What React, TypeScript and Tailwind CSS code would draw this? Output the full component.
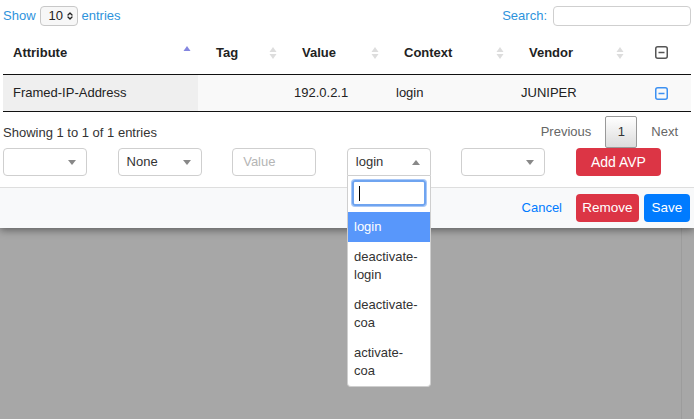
import { ChevronUp, ChevronDown } from "lucide-react";

const cols = "grid grid-cols-[195px_86px_102px_125px_120px_60px]";

function SortArrows({ active }: { active?: boolean }) {
  if (active) {
    return (
      <svg width="8" height="14" viewBox="0 0 8 14" className="shrink-0 -mt-[3px] -ml-[3px]">
        <path d="M4 1 L7.5 6 L0.5 6 Z" fill="#8486e0" />
      </svg>
    );
  }
  return (
    <svg width="8" height="14" viewBox="0 0 8 14" className="shrink-0">
      <path d="M4 1 L7.5 6 L0.5 6 Z" fill="#dddddd" />
      <path d="M4 13 L7.5 8 L0.5 8 Z" fill="#dddddd" />
    </svg>
  );
}

function MinusBox({ color }: { color: string }) {
  return (
    <svg width="13" height="13" viewBox="0 0 13 13">
      <rect x="0.75" y="0.75" width="11.5" height="11.5" rx="2" fill="none" stroke={color} strokeWidth="1.5" />
      <path d="M3.5 6.5 H9.5" stroke={color} strokeWidth="1.5" />
    </svg>
  );
}

function Caret({ up }: { up?: boolean }) {
  return (
    <svg width="8" height="5" viewBox="0 0 8 5">
      {up ? <path d="M4 0 L8 5 L0 5 Z" fill="#888" /> : <path d="M0 0 L8 0 L4 5 Z" fill="#888" />}
    </svg>
  );
}

function Select({ value, up }: { value?: string; up?: boolean }) {
  return (
    <div
      className={`w-[84px] h-[28px] border border-[#cfcfcf] bg-white flex items-center justify-between pl-[8px] pr-[10px] text-[13px] text-[#333] ${
        up ? "rounded-t-[4px]" : "rounded-[4px]"
      }`}
    >
      <span>{value}</span>
      <Caret up={up} />
    </div>
  );
}

function HeaderCell({ label, active, first }: { label: string; active?: boolean; first?: boolean }) {
  return (
    <div className={`flex items-center justify-between pt-[2px] ${first ? "pl-[10px]" : "pl-[18px]"} pr-[7px] font-bold text-[13px] text-[#222]`}>
      <span>{label}</span>
      <SortArrows active={active} />
    </div>
  );
}

export default function App() {
  return (
    <div className="relative w-[694px] h-[419px] overflow-hidden bg-[#a7a7a7] font-['Liberation_Sans',Arial,sans-serif]">
      <div className="absolute left-[681px] top-[228px] w-px h-[191px] bg-[#9c9c9c]" />

      <div className="relative bg-white shadow-[0_2px_8px_rgba(0,0,0,0.45)]">
        <div className="px-[3px]">
          {/* length + search */}
          <div className="h-[30px] flex items-center justify-between pt-[2px] text-[13px] text-[#2e93dc]">
            <div className="flex items-center gap-[4px]">
              <span>Show</span>
              <div className="w-[38px] h-[20px] border border-[#c8c8c8] rounded-[4px] bg-[#f7f7f7] flex items-center justify-between pl-[8px] pr-[3px] text-[#222]">
                <span>10</span>
                <div className="flex flex-col -space-y-[4px]">
                  <ChevronUp size={8} strokeWidth={4} />
                  <ChevronDown size={8} strokeWidth={4} />
                </div>
              </div>
              <span>entries</span>
            </div>
            <div className="flex items-center gap-[6px]">
              <span>Search:</span>
              <div className="w-[138px] h-[20px] border border-[#cfcfcf] rounded-[4px] bg-white" />
            </div>
          </div>

          {/* table header */}
          <div className={`${cols} h-[45px] border-b border-[#111]`}>
            <HeaderCell label="Attribute" active first />
            <HeaderCell label="Tag" />
            <HeaderCell label="Value" />
            <HeaderCell label="Context" />
            <HeaderCell label="Vendor" />
            <div className="flex items-center justify-center">
              <MinusBox color="#555" />
            </div>
          </div>

          {/* row */}
          <div className={`${cols} h-[37px] border-b border-[#111] text-[13px] text-[#222]`}>
            <div className="bg-[#efefef] flex items-center pl-[10px]">Framed-IP-Address</div>
            <div className="bg-[#f9f9f9]" />
            <div className="bg-[#f9f9f9] flex items-center pl-[10px]">192.0.2.1</div>
            <div className="bg-[#f9f9f9] flex items-center pl-[10px]">login</div>
            <div className="bg-[#f9f9f9] flex items-center pl-[10px]">JUNIPER</div>
            <div className="bg-[#f9f9f9] flex items-center justify-center">
              <MinusBox color="#3d91f2" />
            </div>
          </div>

          {/* info + paging */}
          <div className="h-[36px] flex items-start justify-between text-[13px] text-[#333]">
            <span className="mt-[11px]">Showing 1 to 1 of 1 entries</span>
            <div className="flex items-center mt-[4px] mr-[13px] text-[#666]">
              <span className="mr-[14px]">Previous</span>
              <div className="w-[32px] h-[32px] border border-[#999] rounded-[2px] bg-gradient-to-b from-white to-[#dcdcdc] flex items-center justify-center text-[#333]">
                1
              </div>
              <span className="ml-[14px]">Next</span>
            </div>
          </div>

          {/* form row */}
          <div className="h-[39px] flex items-start gap-[30.6px]">
            <Select />
            <Select value="None" />
            <div className="w-[84px] h-[28px] border border-[#cfcfcf] rounded-[4px] flex items-center px-[10px] text-[13px] text-[#b5b5b5]">
              Value
            </div>
            <Select value="login" up />
            <Select />
            <button className="w-[85px] h-[28px] rounded-[4px] bg-[#dc3545] text-white text-[14px]">
              Add AVP
            </button>
          </div>
        </div>

        {/* footer */}
        <div className="h-[41px] border-t border-[#dedede] bg-[#f8f9fa] flex items-center justify-end gap-[5px] pr-[4px]">
          <button className="text-[#007bff] text-[13px] mr-[9px]">Cancel</button>
          <button className="h-[28px] w-[63px] rounded-[4px] bg-[#dc3545] text-white text-[13.5px]">Remove</button>
          <button className="h-[28px] w-[46px] rounded-[4px] bg-[#007bff] text-white text-[13.5px]">Save</button>
        </div>
      </div>

      {/* open dropdown */}
      <div className="absolute left-[347px] top-[176px] w-[84px] bg-white border border-[#cfcfcf] border-t-0 rounded-b-[4px] text-[13px] text-[#333]">
        <div className="p-[4px]">
          <div className="h-[26px] border-2 border-[#6fa4f0] rounded-[3px] shadow-[0_0_0_1px_#a9c8f7] flex items-center pl-[5px]">
            <div className="w-px h-[15px] bg-black" />
          </div>
        </div>
        <div className="mt-[2px] h-[30px] bg-[#5897fb] text-white flex items-center pl-[6px]">login</div>
        <div className="px-[6px] py-[6px] leading-[18px]">deactivate-<br />login</div>
        <div className="px-[6px] py-[6px] leading-[18px]">deactivate-<br />coa</div>
        <div className="px-[6px] py-[6px] leading-[18px]">activate-<br />coa</div>
      </div>
    </div>
  );
}
